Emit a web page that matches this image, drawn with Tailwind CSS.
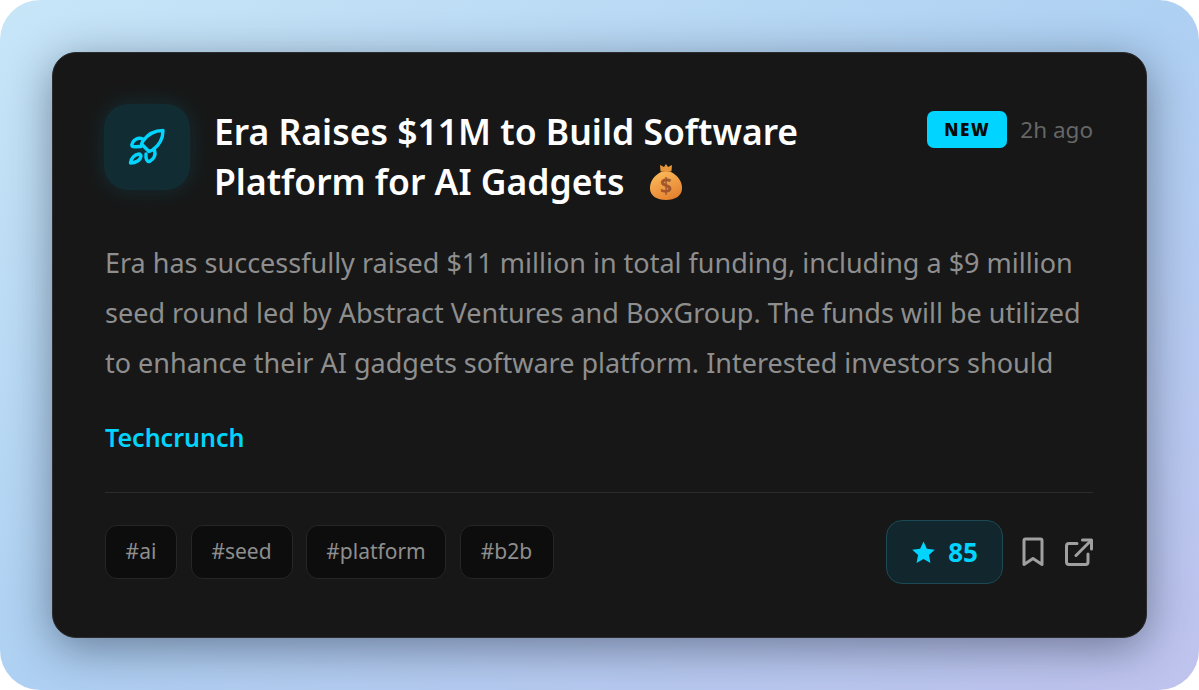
<!DOCTYPE html>
<html lang="en">
<head>
    <meta charset="UTF-8">
    <meta name="viewport" content="width=device-width, initial-scale=1.0">
    <title>News card</title>
    <script src="https://cdn.jsdelivr.net/npm/@tailwindcss/browser@4"></script>
</head>
<body class="bg-white overflow-hidden font-['Noto_Sans',sans-serif]">
    <div class="w-[1199px] h-[690px] rounded-[40px] bg-gradient-to-br from-[#c8e6f8] via-[#aed0f2] to-[#bfc3ee] p-[52px] overflow-hidden">
        <div class="w-[1095px] h-[586px] rounded-[24px] bg-[#171717] border border-[#2c2c2e] shadow-[0_10px_45px_rgba(15,23,42,0.45)] pt-[51px] pl-[52px] pr-[53px]">
            <div class="flex items-start">
                <div class="-ml-px w-[86px] h-[86px] shrink-0 rounded-[24px] bg-[#122c34] shadow-[0_0_24px_rgba(0,212,255,0.12)] flex items-center justify-center">
                    <svg class="w-[40px] h-[40px]" viewBox="0 0 40 40" fill="none" stroke="#00d4ff" stroke-width="3.400" stroke-linejoin="round" stroke-linecap="round">
                        <path d="M36 3.500 C28 3.500 21 7 16 14 L14.500 17 L22 24.500 L25.500 23 C32 18.500 36 11 36 3.500 Z"/>
                        <path d="M16 12 C11 10 6 12.500 4.800 18 C4.800 19.500 6 19.800 8 19.800 L14 19.500"/>
                        <path d="M27.500 23 C29 28 27 32 22.500 34.500 C20 35 18.500 32 19 27"/>
                        <path d="M12 27 C8 27.500 4 31 3.500 36 C9 36 13.500 33 14 29 C14 28 13 27 12 27 Z"/>
                    </svg>
                </div>
                <h1 class="ml-[24px] w-[640px] text-[35.500px] leading-[50px] font-semibold text-white mt-[2px]">Era Raises $11M to Build Software Platform for AI Gadgets
                    <svg class="inline-block ml-[13px] align-[-6px] w-[38px] h-[38px]" viewBox="0 0 38 38" role="img" aria-label="money bag">
                        <defs>
                            <linearGradient id="bag" x1="0.2" y1="0.1" x2="0.7" y2="1">
                                <stop offset="0" stop-color="#f9b657"/>
                                <stop offset="1" stop-color="#e47f2e"/>
                            </linearGradient>
                        </defs>
                        <path d="M13 2 L17 4 L19 1 L21 4 L25 2 L24.500 8 C24 9.500 14 9.500 13.500 8 Z" fill="#e8963c"/>
                        <path d="M14 9 H24 C31 12.500 35.500 19 35 26 C34.500 33 28 37 19 37 C10 37 3.500 33 3 26 C2.500 19 7 12.500 14 9 Z" fill="url(#bag)"/>
                        <text x="19" y="30" text-anchor="middle" font-size="21" font-weight="700" fill="#a4552c">$</text>
                    </svg>
                </h1>
                <div class="ml-auto flex items-center gap-[13px] mt-[7px]">
                    <span class="w-[80px] h-[37px] rounded-[7px] bg-[#00d4ff] flex items-center justify-center text-[17px] font-black tracking-[1.7px] text-[#0a0a0a]">NEW</span>
                    <span class="text-[22.500px] leading-[37px] text-[#666666]">2h ago</span>
                </div>
            </div>
            <p class="mt-[32px] text-[27px] leading-[50px] text-[#8e8e8e]">Era has successfully raised $11 million in total funding, including a $9 million seed round led by Abstract Ventures and BoxGroup. The funds will be utilized to enhance their AI gadgets software platform. Interested investors should</p>
            <div class="mt-[24px] text-[25px] leading-[50px] font-semibold text-[#00d4ff]">Techcrunch</div>
            <div class="mt-[30px] border-t border-[#2c2c2c] pt-[27px] flex items-center justify-between">
                <div class="flex gap-[13.500px]">
                    <span class="w-[72px] h-[54px] flex items-center justify-center rounded-[12px] bg-[#0d0d0d] border border-[#262626] text-[21px] text-[#8e8e8e]">#ai</span>
                    <span class="w-[102px] h-[54px] flex items-center justify-center rounded-[12px] bg-[#0d0d0d] border border-[#262626] text-[21px] text-[#8e8e8e]">#seed</span>
                    <span class="w-[140px] h-[54px] flex items-center justify-center rounded-[12px] bg-[#0d0d0d] border border-[#262626] text-[21px] text-[#8e8e8e]">#platform</span>
                    <span class="w-[94px] h-[54px] flex items-center justify-center rounded-[12px] bg-[#0d0d0d] border border-[#262626] text-[21px] text-[#8e8e8e]">#b2b</span>
                </div>
                <div class="flex items-center">
                    <div class="w-[117px] h-[64px] rounded-[16px] bg-[#12262d] border border-[#1b4a56] flex items-center justify-center gap-[12px]">
                        <svg class="w-[25px] h-[25px]" viewBox="0 0 24 24" fill="#00d4ff"><path d="M12 1.500 L15.200 8.400 L22.800 9.300 L17.200 14.500 L18.700 22 L12 18.200 L5.300 22 L6.800 14.500 L1.200 9.300 L8.800 8.400 Z"/></svg>
                        <span class="text-[26px] font-bold text-[#00d4ff]">85</span>
                    </div>
                    <svg class="ml-[18px] w-[24px] h-[30px]" viewBox="0 0 24 30" fill="none" stroke="#a0a0a0" stroke-width="3" stroke-linejoin="round"><path d="M3 3.500 C3 2.500 3.500 2 4.500 2 H19.500 C20.500 2 21 2.500 21 3.500 V27.500 L12 21.500 L3 27.500 Z"/></svg>
                    <svg class="ml-[20px] w-[28px] h-[28px]" viewBox="0 0 28 28" fill="none" stroke="#a0a0a0" stroke-width="3" stroke-linejoin="round" stroke-linecap="round"><path d="M12 5.500 H4 C2.500 5.500 1.500 6.500 1.500 8 V24 C1.500 25.500 2.500 26.500 4 26.500 H20.500 C22 26.500 23 25.500 23 24 V16"/><path d="M11 17.500 L26 2.500"/><path d="M17.500 2 H26.500 V11"/></svg>
                </div>
            </div>
        </div>
    </div>
</body>
</html>
